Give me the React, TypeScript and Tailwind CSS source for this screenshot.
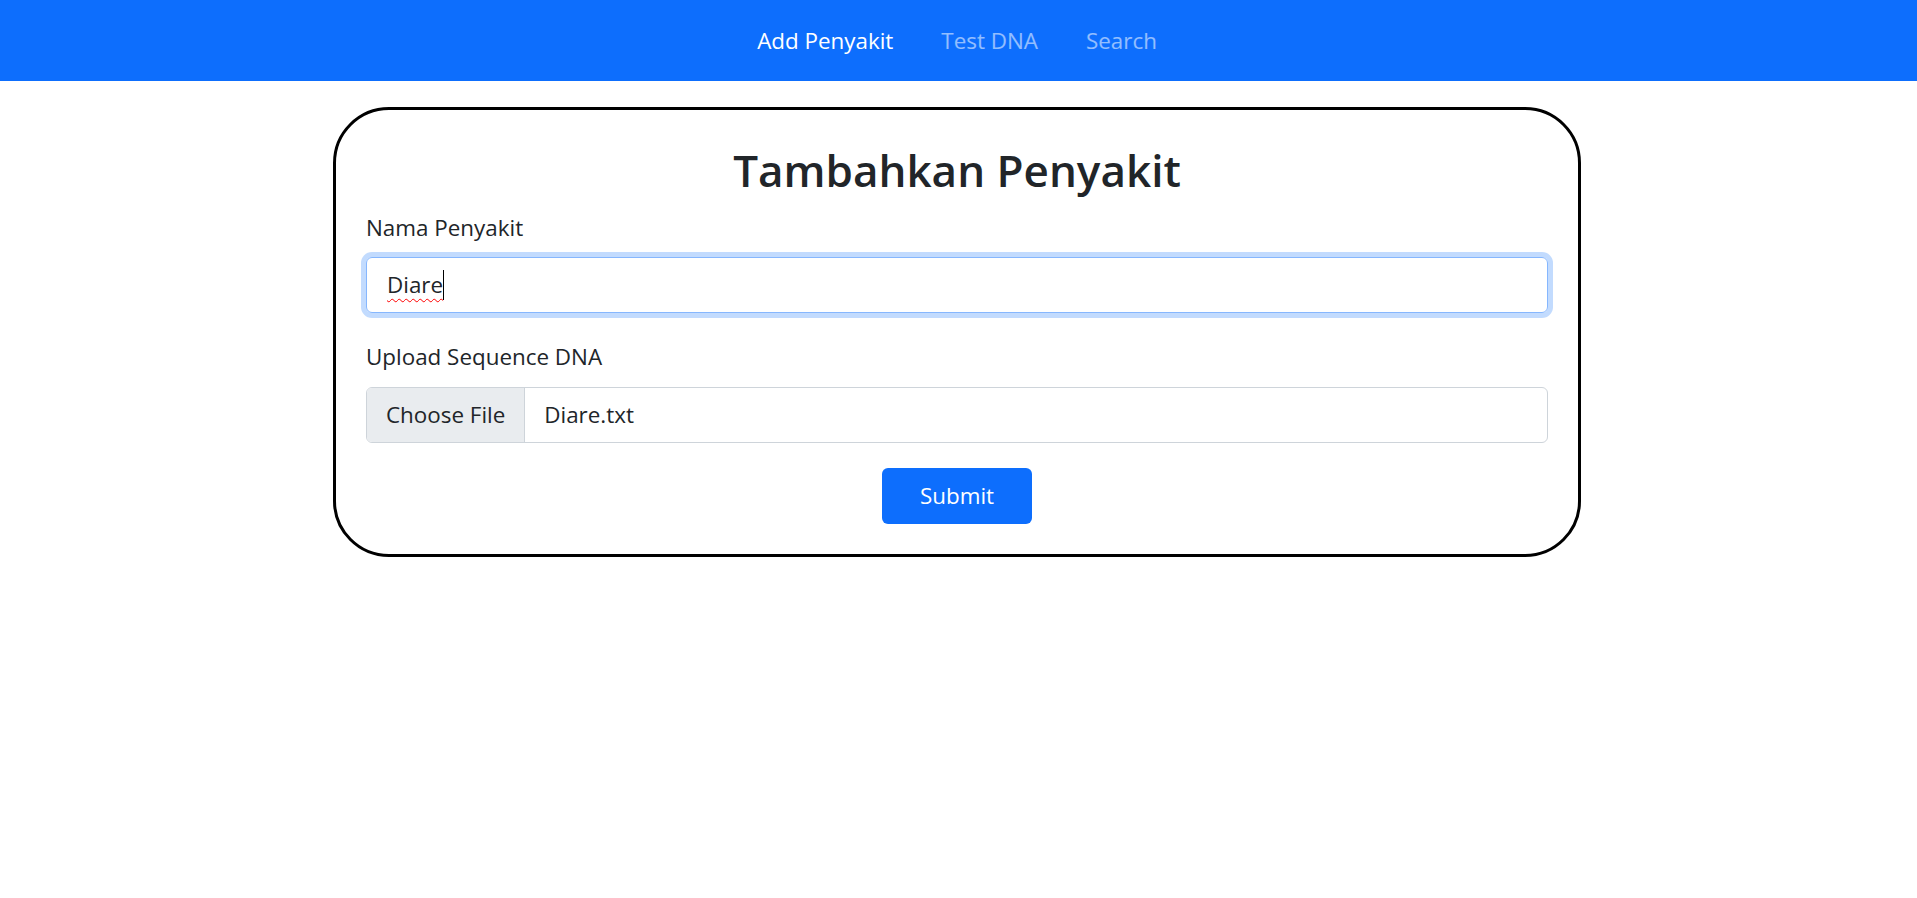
import React from "react";

export default function App() {
  return (
    <div className="min-h-screen bg-white text-[#212529]" style={{ fontFamily: "'Open Sans', sans-serif" }}>
      <nav className="h-[81px] bg-[#0d6efd] flex items-center justify-center gap-[48px] pr-[3px] text-[22.4px]">
        <span className="text-white">Add Penyakit</span>
        <span className="text-white/55">Test DNA</span>
        <span className="text-white/55">Search</span>
      </nav>
      <div className="flex justify-center pt-[26px] pr-[3px]">
        <div className="w-[1248px] border-[3px] border-black rounded-[56px] px-[30px] pt-[33.5px] pb-[30px]">
          <h1 className="text-center text-[44px] font-semibold leading-[1.2]">Tambahkan Penyakit</h1>
          <div className="text-[22.4px] leading-[1.5] mt-[15px]">Nama Penyakit</div>
          <div className="mt-[12px] h-[56px] rounded-[6px] border border-[#86b7fe] shadow-[0_0_0_5px_rgba(13,110,253,0.25)] flex items-center pl-[20px] text-[22.4px]">
            <span className="underline decoration-wavy decoration-[#ff0000] decoration-1 underline-offset-[5px]">Diare</span>
            <span className="inline-block w-px h-[30px] bg-black"></span>
          </div>
          <div className="text-[22.4px] leading-[1.5] mt-[27.5px]">Upload Sequence DNA</div>
          <div className="mt-[12.5px] h-[56px] rounded-[6px] border border-[#ced4da] flex items-stretch text-[22.4px] overflow-hidden">
            <div className="bg-[#e9ecef] border-r border-[#ced4da] flex items-center px-[19px]">Choose File</div>
            <div className="flex items-center pl-[19px]">Diare.txt</div>
          </div>
          <div className="flex justify-center mt-[25px]">
            <button className="w-[150px] h-[56px] rounded-[6px] bg-[#0d6efd] text-white text-[22.4px]">Submit</button>
          </div>
        </div>
      </div>
    </div>
  );
}
